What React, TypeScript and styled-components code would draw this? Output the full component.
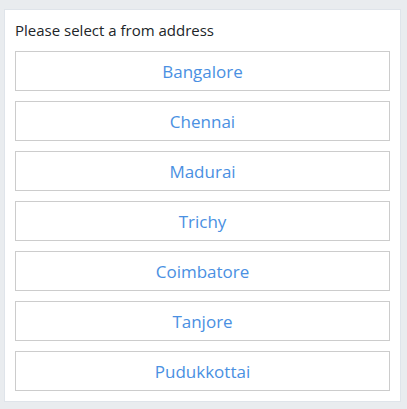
import React from "react";
import styled, { createGlobalStyle } from "styled-components";

const GlobalStyle = createGlobalStyle`
  html, body {
    margin: 0;
    padding: 0;
    background: #e9ecef;
  }
  body {
    font-family: "Open Sans", "Noto Sans", "Liberation Sans", sans-serif;
  }
`;

const Page = styled.div`
  padding: 9px 6px 8px 4px;
`;

const Card = styled.div`
  background: #ffffff;
  border: 1px solid #dfe4ea;
  padding: 10px;
  display: flex;
  flex-direction: column;
`;

const Prompt = styled.div`
  font-size: 15px;
  line-height: 21px;
  color: #212529;
  margin: 0 0 10px 0;
`;

const List = styled.div`
  display: flex;
  flex-direction: column;
  gap: 10px;
`;

const AddressButton = styled.button`
  height: 40px;
  width: 100%;
  background: #ffffff;
  border: 1px solid #cccccc;
  border-radius: 0;
  color: #4a90e2;
  font-family: "Open Sans", "Noto Sans", "Liberation Sans", sans-serif;
  font-size: 17px;
  cursor: pointer;
  padding: 0;
`;

const cities = [
  "Bangalore",
  "Chennai",
  "Madurai",
  "Trichy",
  "Coimbatore",
  "Tanjore",
  "Pudukkottai",
];

const App = () => (
  <Page>
    <GlobalStyle />
    <Card>
      <Prompt>Please select a from address</Prompt>
      <List>
        {cities.map((city) => (
          <AddressButton key={city}>{city}</AddressButton>
        ))}
      </List>
    </Card>
  </Page>
);

export default App;
